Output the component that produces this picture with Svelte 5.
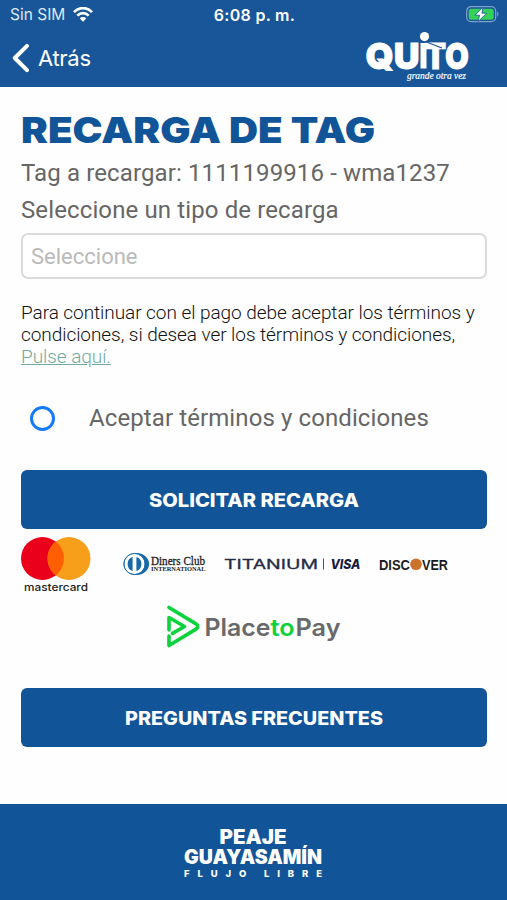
<script lang="ts">
    let tag = '1111199916';
    let plate = 'wma1237';
    let accepted = false;
    let rechargeType = '';
</script>

<div class="screen">
    <header>
        <div class="status">
            <div class="carrier">
                <span>Sin SIM</span>
                <svg width="20" height="15" viewBox="0 0 20 15" fill="none" stroke="#fff" stroke-width="2.7">
                    <path d="M1 5.2C6-.3 14-.3 19 5.2" />
                    <path d="M4.3 8.6c3.3-3.4 8.1-3.4 11.4 0" />
                    <path d="M6.8 11.4c1.8-1.9 4.6-1.9 6.4 0L10 14.8z" fill="#fff" stroke="none" />
                </svg>
            </div>
            <span class="time">6:08 p. m.</span>
            <svg class="battery" width="34" height="17" viewBox="0 0 34 17">
                <rect x="1.7" y=".7" width="29" height="15" rx="4.4" fill="none" stroke="#7fa3cb" stroke-width="1.2" />
                <rect x="3.7" y="2.7" width="25" height="11" rx="2.6" fill="#34d058" />
                <path d="M32.2 5.6v5.2c1.6-.8 1.6-4.4 0-5.2z" fill="#7fa3cb" />
                <path d="M18 1.2 10 9.2h4.6l-1.5 6.4 8.6-8.4h-4.8z" fill="#fff" stroke="#185699" stroke-width=".8" />
            </svg>
        </div>
        <div class="nav">
            <button class="back">
                <svg width="18" height="30" viewBox="0 0 18 30" fill="none" stroke="#fff" stroke-width="4" stroke-linecap="round" stroke-linejoin="round">
                    <path d="M15 2.8 2.8 15 15 27.2" />
                </svg>
                <span>Atrás</span>
            </button>
            <svg class="quito" width="106" height="54" viewBox="0 0 106 54" fill="#fff">
                <g class="quito-name">
                    <text x="1.5" y="37.5" textLength="54" lengthAdjust="spacingAndGlyphs">QU</text>
                    <text x="61" y="37.5" textLength="44" lengthAdjust="spacingAndGlyphs">TO</text>
                </g>
                <path d="M56.5 12h6v25.5h-6z" />
                <circle cx="60.5" cy="5.6" r="4.6" />
                <path d="m61 10.5 17 6.5" stroke="#185699" stroke-width="1.3" />
                <text class="motto" x="43" y="48" textLength="59" lengthAdjust="spacingAndGlyphs">grande otra vez</text>
            </svg>
        </div>
    </header>

    <main>
        <h1>
            <svg width="360" height="44" viewBox="0 0 360 44">
                <text x="0" y="35" textLength="354" lengthAdjust="spacingAndGlyphs">RECARGA DE TAG</text>
            </svg>
        </h1>
        <p class="lead">Tag a recargar: {tag} - {plate}</p>
        <p class="lead">Seleccione un tipo de recarga</p>
        <input placeholder="Seleccione" readonly bind:value={rechargeType} />

        <p class="terms">
            Para continuar con el pago debe aceptar los términos y<br />
            condiciones, si desea ver los términos y condiciones,<br />
            <a href="#terminos">Pulse aquí.</a>
        </p>

        <label>
            <input type="checkbox" bind:checked={accepted} />
            <span>Aceptar términos y condiciones</span>
        </label>

        <button class="action request">
            <svg width="210" height="24" viewBox="0 0 210 24">
                <text x="0" y="18.5" textLength="210" lengthAdjust="spacingAndGlyphs">SOLICITAR RECARGA</text>
            </svg>
        </button>

        <div class="cards">
            <svg width="70" height="57" viewBox="0 0 70 57">
                <circle cx="21.5" cy="21.5" r="21.5" fill="#eb001b" />
                <circle cx="48" cy="21.5" r="21.5" fill="#f79e1b" />
                <path d="M34.75 4.6a21.5 21.5 0 0 1 0 33.8 21.5 21.5 0 0 1 0-33.8z" fill="#ff5f00" />
                <text class="mastercard" x="3" y="53.5" textLength="64" lengthAdjust="spacingAndGlyphs">mastercard</text>
            </svg>
            <svg class="diners" width="84" height="28" viewBox="0 0 84 28">
                <ellipse cx="13.3" cy="12" rx="12.8" ry="11" fill="#1769a8" />
                <circle cx="11.5" cy="12" r="10.2" fill="#fff" />
                <circle cx="11.5" cy="12" r="10.6" fill="none" stroke="#1769a8" stroke-width=".9" />
                <path d="M9.6 5a7.4 7.4 0 0 0 0 14zM13.4 5a7.4 7.4 0 0 1 0 14z" fill="#1769a8" />
                <text class="club" x="28" y="12.5" textLength="54" lengthAdjust="spacingAndGlyphs">Diners Club</text>
                <text class="international" x="28" y="19.3" textLength="54.5" lengthAdjust="spacingAndGlyphs">INTERNATIONAL</text>
            </svg>
            <svg class="titanium" width="138" height="20" viewBox="0 0 138 20">
                <text class="titanium-name" x="0" y="13.5" textLength="94" lengthAdjust="spacingAndGlyphs">TITANIUM</text>
                <path d="M99.5 3.5v11" stroke="#4d536b" />
                <text class="visa" x="106.5" y="13.5" textLength="30" lengthAdjust="spacingAndGlyphs">VISA</text>
            </svg>
            <svg class="discover" width="72" height="24" viewBox="0 0 72 24">
                <text x="0" y="16.8" textLength="31" lengthAdjust="spacingAndGlyphs">DISC</text>
                <circle cx="37" cy="11.3" r="5.8" fill="#cb722d" />
                <text x="43" y="16.8" textLength="26" lengthAdjust="spacingAndGlyphs">VER</text>
            </svg>
        </div>

        <div class="placetopay">
            <svg width="175" height="44" viewBox="0 0 175 44" fill="none">
                <g stroke="#0bd33b" stroke-width="3.6" stroke-linejoin="round" stroke-linecap="round">
                    <path d="m3 2.5 27 16.4c2.3 1.4 2.3 3.8 0 5.2L3 40.5V31" />
                    <path d="M3 25V12.5L18.5 21.5 6.5 28.4" />
                </g>
                <g class="ptp-name">
                    <text x="38.5" y="30.5" textLength="66" lengthAdjust="spacingAndGlyphs">Place</text>
                    <text class="to" x="104.5" y="30.5" textLength="24" lengthAdjust="spacingAndGlyphs">to</text>
                    <text x="129.5" y="30.5" textLength="45" lengthAdjust="spacingAndGlyphs">Pay</text>
                </g>
            </svg>
        </div>

        <button class="action faq">
            <svg width="258" height="24" viewBox="0 0 258 24">
                <text x="0" y="18.5" textLength="258" lengthAdjust="spacingAndGlyphs">PREGUNTAS FRECUENTES</text>
            </svg>
        </button>
    </main>

    <footer>
        <svg width="140" height="58" viewBox="0 0 140 58" fill="#fff">
            <text class="toll" x="35.5" y="20.3" textLength="67" lengthAdjust="spacingAndGlyphs">PEAJE</text>
            <text class="toll" x="0" y="40" textLength="138" lengthAdjust="spacingAndGlyphs">GUAYASAMÍN</text>
            <text class="flow" x="0" y="53.3" textLength="138">FLUJO LIBRE</text>
        </svg>
    </footer>
</div>

<style>
    :global(body) {
        margin: 0;
        background: #fff;
    }

    .screen {
        display: flex;
        flex-direction: column;
        height: 900px;
        overflow: hidden;
        background: #fefefe;
        font-family: Roboto, sans-serif;
        color: #666;
    }

    header {
        height: 87px;
        flex: none;
        background: #185699;
        color: #fff;
    }

    .status {
        display: grid;
        grid-template-columns: 1fr auto 1fr;
        align-items: center;
        height: 29px;
        padding: 0 8px 0 10px;
        font-family: Inter, sans-serif;
        font-size: 15.5px;
    }

    .carrier {
        display: flex;
        align-items: center;
        gap: 8px;
        color: #dce8f5;
    }

    .time {
        font-size: 16px;
        font-weight: 600;
        letter-spacing: 0.3px;
    }

    .battery {
        justify-self: end;
    }

    .nav {
        display: flex;
        justify-content: space-between;
        height: 58px;
        padding: 0 37px 0 12px;
    }

    .back {
        display: flex;
        align-items: center;
        gap: 8px;
        height: 58px;
        padding: 0;
        border: none;
        background: none;
        color: #fff;
        font-family: Inter, sans-serif;
        font-size: 22px;
        letter-spacing: -0.3px;
    }

    .quito {
        margin-top: 2px;
    }

    .quito-name {
        font: 900 36px Inter, sans-serif;
        stroke: #fff;
        stroke-width: 0.8;
    }

    .motto {
        font: italic 10px "Liberation Serif", serif;
        stroke: #fff;
        stroke-width: 0.2;
    }

    main {
        flex: 1;
        display: flex;
        flex-direction: column;
        padding: 0 20px 0 21px;
    }

    h1 {
        height: 44px;
        margin: 21px 0 0;
        font: 900 36px/44px Inter, sans-serif;
        fill: #115598;
    }

    h1 svg,
    .action svg {
        display: block;
    }

    p {
        margin: 0;
    }

    .lead {
        height: 37px;
        font-size: 24px;
        line-height: 43px;
        letter-spacing: 0.12px;
        white-space: nowrap;
    }

    main > input {
        box-sizing: border-box;
        height: 46px;
        margin-top: 7px;
        padding: 0 8px;
        border: 2px solid #dadada;
        border-radius: 7px;
        background: #fff;
        font: 22px Roboto, sans-serif;
        outline: none;
    }

    main > input::placeholder {
        color: #bababa;
    }

    .terms {
        margin-top: 23px;
        font-size: 19px;
        font-weight: 300;
        line-height: 22px;
        letter-spacing: -0.06px;
        color: #111;
        white-space: nowrap;
    }

    a {
        color: #72ab9d;
    }

    label {
        display: flex;
        align-items: center;
        gap: 33px;
        height: 30px;
        margin: 35px 0 0 9px;
        font-size: 24px;
        letter-spacing: 0.1px;
    }

    label input {
        appearance: none;
        box-sizing: border-box;
        width: 25px;
        height: 25px;
        margin: 0 1px 0 0;
        border: 3px solid #1479fb;
        border-radius: 50%;
    }

    .action {
        display: flex;
        align-items: center;
        justify-content: center;
        height: 59px;
        flex: none;
        padding: 0;
        border: none;
        border-radius: 6px;
        background: #115598;
        fill: #fff;
        font: 800 18.5px Inter, sans-serif;
    }

    .request {
        margin-top: 37px;
    }

    .cards {
        display: flex;
        align-items: center;
        height: 57px;
        margin-top: 8px;
    }

    .mastercard {
        font: 500 10.5px Inter, sans-serif;
        fill: #222;
    }

    .diners {
        margin-left: 32px;
    }

    .club {
        font: 12.5px "Liberation Serif", serif;
        fill: #222;
        stroke: #222;
        stroke-width: 0.3;
    }

    .international {
        font: 700 6.5px "Liberation Serif", serif;
        fill: #222;
    }

    .titanium {
        margin: 0 0 2px 17px;
    }

    .titanium-name {
        font: 13px Inter, sans-serif;
        fill: #252b46;
        stroke: #252b46;
        stroke-width: 0.3;
    }

    .visa {
        font: italic 800 13px Inter, sans-serif;
        fill: #171c44;
    }

    .discover {
        margin: 0 0 2px 17px;
        font: 700 15.5px "Liberation Sans", sans-serif;
        fill: #1c1c1c;
    }

    .placetopay {
        display: flex;
        height: 44px;
        margin: 11px 0 0 145px;
    }

    .ptp-name {
        font: 600 24px Inter, sans-serif;
        fill: #68696b;
    }

    .to {
        fill: #0bd33b;
    }

    .faq {
        margin-top: 39px;
    }

    footer {
        display: flex;
        justify-content: center;
        box-sizing: border-box;
        height: 96px;
        flex: none;
        padding-top: 20px;
        background: #115598;
    }

    .toll {
        font: 900 19.5px Inter, sans-serif;
    }

    .flow {
        font: 800 9.5px Inter, sans-serif;
    }
</style>
